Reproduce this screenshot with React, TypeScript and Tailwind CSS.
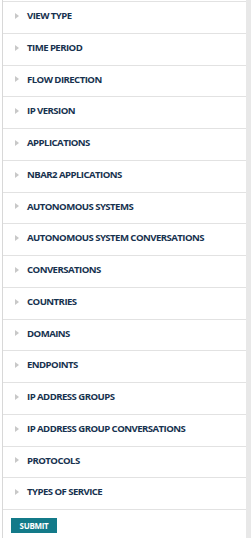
import React from "react";

const items = [
  "VIEW TYPE",
  "TIME PERIOD",
  "FLOW DIRECTION",
  "IP VERSION",
  "APPLICATIONS",
  "NBAR2 APPLICATIONS",
  "AUTONOMOUS SYSTEMS",
  "AUTONOMOUS SYSTEM CONVERSATIONS",
  "CONVERSATIONS",
  "COUNTRIES",
  "DOMAINS",
  "ENDPOINTS",
  "IP ADDRESS GROUPS",
  "IP ADDRESS GROUP CONVERSATIONS",
  "PROTOCOLS",
  "TYPES OF SERVICE",
];

export default function App() {
  return (
    <div
      className="w-[251px] h-[538px] flex bg-white overflow-hidden"
      style={{ fontFamily: '"Open Sans", "Liberation Sans", sans-serif' }}
    >
      <div className="w-[2px] shrink-0 bg-white" />
      <div className="flex-1 flex flex-col border-l border-[#d8d8d8] pt-[1px]">
        <div className="border-t border-[#e2e2e2]" />
        {items.map((t) => (
          <div
            key={t}
            className="h-[31.75px] box-border flex items-center border-b border-[#e2e2e2] pl-[12px] pb-[3px]"
          >
            <svg width="4" height="6" viewBox="0 0 4 6" className="shrink-0">
              <path d="M0 0 L4 3 L0 6 Z" fill="#c8c8c8" />
            </svg>
            <span className="ml-[8px] text-[9.6px] font-bold text-[#17324f] tracking-[-0.55px] leading-none">
              {t}
            </span>
          </div>
        ))}
        <div className="pl-[8px] pt-[8px]">
          <button className="w-[46px] h-[15px] bg-[#137a89] text-white text-[8px] font-bold leading-none flex items-center justify-center tracking-[-0.3px]">
            SUBMIT
          </button>
        </div>
      </div>
      <div className="w-[5px] shrink-0 bg-[#e8e8e8]" />
    </div>
  );
}
